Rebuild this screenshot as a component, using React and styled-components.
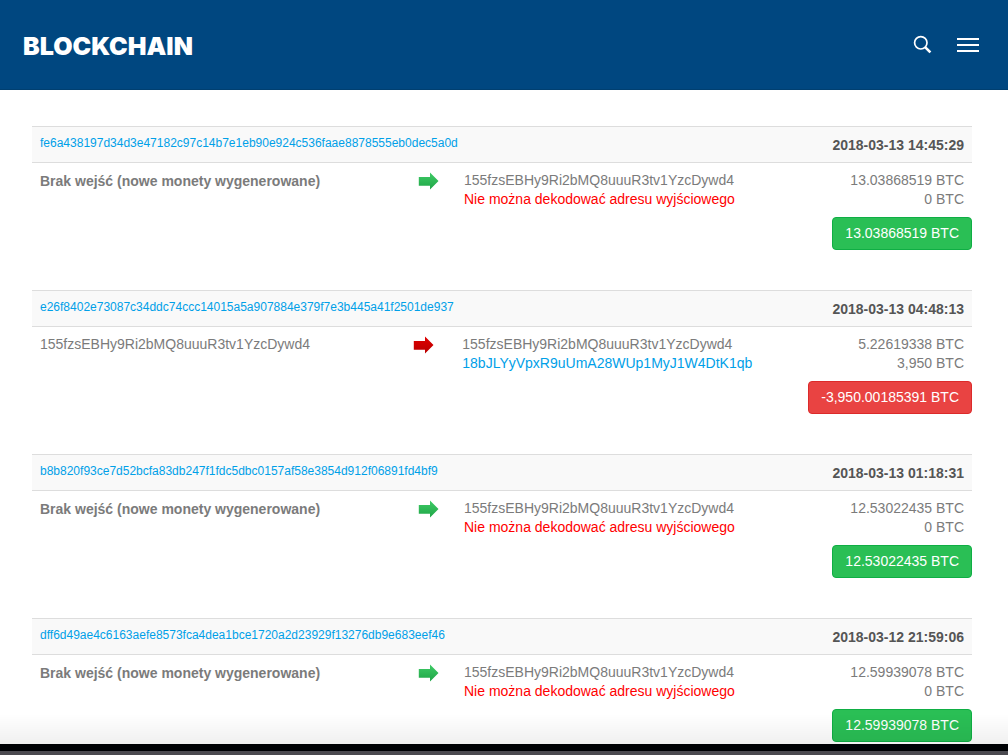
import React from "react";
import styled, { createGlobalStyle } from "styled-components";

const GlobalStyle = createGlobalStyle`
  *, *::before, *::after { box-sizing: border-box; }
  body {
    margin: 0;
    background: #fff;
    color: #7b7b7b;
    font-family: "Liberation Sans", Arial, sans-serif;
    font-size: 14px;
    line-height: 19px;
  }
`;

const Header = styled.header`
  display: flex;
  align-items: center;
  justify-content: space-between;
  height: 90px;
  padding: 0 28px 0 23px;
  background: #004780;
  border-bottom: 1px solid #003f70;
`;

const Logo = styled.a`
  color: #fff;
  font-family: Inter, sans-serif;
  font-size: 25px;
  font-weight: 900;
  line-height: 32px;
  padding-top: 3px;
  text-decoration: none;
`;

const Tools = styled.div`
  display: flex;
  align-items: center;
  gap: 24px;
`;

const IconButton = styled.button`
  display: flex;
  padding: 0;
  border: 0;
  background: none;
  color: #fff;
  cursor: pointer;
`;

const Main = styled.main`
  display: flex;
  flex-direction: column;
  gap: 40px;
  padding: 36px 36px 11px 32px;
`;

const Transaction = styled.article`
  display: flex;
  flex-direction: column;
  align-items: flex-end;
`;

const Table = styled.table`
  width: 100%;
  table-layout: fixed;
  border-collapse: separate;
  border-spacing: 0;
`;

const InputCol = styled.col`
  width: ${(p) => (p.$spent ? "39.5%" : "40%")};
`;

const ArrowCol = styled.col`
  width: ${(p) => (p.$spent ? 51 : 48)}px;
`;

const AmountCol = styled.col`
  width: 20%;
`;

const HeadCell = styled.th`
  padding: ${(p) => (p.$date ? "9px 8px 7px" : "7px 8px 9px")};
  background: #f9f9f9;
  border: solid #ddd;
  border-width: 1px 0;
  color: #555;
  font-weight: ${(p) => (p.$date ? 700 : 400)};
  text-align: ${(p) => (p.$date ? "right" : "left")};
  vertical-align: top;
  white-space: nowrap;
`;

const Cell = styled.td`
  padding: 8px;
  text-align: ${(p) => (p.$right ? "right" : "left")};
  vertical-align: top;
  white-space: nowrap;
`;

const ArrowCell = styled(Cell)`
  padding: 8px 10px;
`;

const Arrow = styled.svg`
  display: block;
`;

const Link = styled.a`
  color: #00a0e8;
  text-decoration: none;
`;

const HashLink = styled(Link)`
  display: block;
  font-size: 12px;
`;

const Line = styled.div`
  color: ${(p) => (p.$error ? "#f00" : "inherit")};
`;

const NewCoins = styled.strong`
  display: block;
  padding-top: 1px;
`;

const Total = styled.button`
  height: 33px;
  padding: 0 12px;
  border: 1px solid ${(p) => (p.$spent ? "#dc2a2a" : "#0fae44")};
  border-radius: 4px;
  background: ${(p) => (p.$spent ? "#e94342" : "#2abf55")};
  color: #fff;
  font: inherit;
  white-space: nowrap;
  cursor: pointer;
`;

const ScreenEdge = styled.div`
  position: fixed;
  right: 0;
  bottom: 0;
  left: 0;
  pointer-events: none;
`;

const EdgeShade = styled.div`
  height: 30px;
  background: linear-gradient(rgba(0, 0, 0, 0), rgba(0, 0, 0, 0.06));
`;

const EdgeBar = styled.div`
  height: 11px;
  background: #4b4a50;
  border-top: 7px solid #000205;
`;

const ADDRESS = "155fzsEBHy9Ri2bMQ8uuuR3tv1YzcDywd4";
const UNDECODED = "Nie można dekodować adresu wyjściowego";

const transactions = [
  {
    hash: "fe6a438197d34d3e47182c97c14b7e1eb90e924c536faae8878555eb0dec5a0d",
    date: "2018-03-13 14:45:29",
    amounts: ["13.03868519 BTC", "0 BTC"],
    total: "13.03868519 BTC",
  },
  {
    hash: "e26f8402e73087c34ddc74ccc14015a5a907884e379f7e3b445a41f2501de937",
    date: "2018-03-13 04:48:13",
    from: ADDRESS,
    to: "18bJLYyVpxR9uUmA28WUp1MyJ1W4DtK1qb",
    amounts: ["5.22619338 BTC", "3,950 BTC"],
    total: "-3,950.00185391 BTC",
  },
  {
    hash: "b8b820f93ce7d52bcfa83db247f1fdc5dbc0157af58e3854d912f06891fd4bf9",
    date: "2018-03-13 01:18:31",
    amounts: ["12.53022435 BTC", "0 BTC"],
    total: "12.53022435 BTC",
  },
  {
    hash: "dff6d49ae4c6163aefe8573fca4dea1bce1720a2d23929f13276db9e683eef46",
    date: "2018-03-12 21:59:06",
    amounts: ["12.59939078 BTC", "0 BTC"],
    total: "12.59939078 BTC",
  },
];

function DirectionArrow({ spent }) {
  const id = spent ? "arrow-red" : "arrow-green";
  return (
    <Arrow width="21" height="20" viewBox="0 0 21 20" aria-hidden="true">
      <defs>
        <linearGradient id={id} x1="0" y1="0" x2="0" y2="1">
          <stop offset="0" stopColor={spent ? "#e00000" : "#3fcb66"} />
          <stop offset="1" stopColor={spent ? "#b80000" : "#1fa547"} />
        </linearGradient>
      </defs>
      <path d="M0.8 6H12V1.5L20.5 10L12 18.6V14.8H0.8Z" fill={`url(#${id})`} />
    </Arrow>
  );
}

function TransactionItem({ tx }) {
  const spent = Boolean(tx.from);
  return (
    <Transaction>
      <Table>
        <colgroup>
          <InputCol $spent={spent} />
          <ArrowCol $spent={spent} />
          <col />
          <AmountCol />
        </colgroup>
        <thead>
          <tr>
            <HeadCell colSpan={3}>
              <HashLink href="#">{tx.hash}</HashLink>
            </HeadCell>
            <HeadCell $date>{tx.date}</HeadCell>
          </tr>
        </thead>
        <tbody>
          <tr>
            <Cell>
              {spent ? tx.from : <NewCoins>Brak wejść (nowe monety wygenerowane)</NewCoins>}
            </Cell>
            <ArrowCell>
              <DirectionArrow spent={spent} />
            </ArrowCell>
            <Cell>
              <Line>{ADDRESS}</Line>
              {spent ? (
                <Line><Link href="#">{tx.to}</Link></Line>
              ) : (
                <Line $error>{UNDECODED}</Line>
              )}
            </Cell>
            <Cell $right>
              {tx.amounts.map((amount) => (
                <Line key={amount}>{amount}</Line>
              ))}
            </Cell>
          </tr>
        </tbody>
      </Table>
      <Total type="button" $spent={spent}>{tx.total}</Total>
    </Transaction>
  );
}

export default function App() {
  return (
    <>
      <GlobalStyle />
      <Header>
        <Logo href="#">BLOCKCHAIN</Logo>
        <Tools>
          <IconButton type="button" aria-label="Szukaj">
            <svg width="20" height="20" viewBox="0 0 20 20" fill="none" stroke="currentColor">
              <circle cx="7.8" cy="7.8" r="6.2" strokeWidth="1.7" />
              <path d="M12.1 12.1L17.4 17.4" strokeWidth="2.6" />
            </svg>
          </IconButton>
          <IconButton type="button" aria-label="Menu">
            <svg width="23" height="20" viewBox="0 0 23 20" fill="currentColor">
              <path d="M0 3H22V5H0ZM0 9H22V11H0ZM0 15H22V17H0Z" />
            </svg>
          </IconButton>
        </Tools>
      </Header>
      <Main>
        {transactions.map((tx) => (
          <TransactionItem key={tx.hash} tx={tx} />
        ))}
      </Main>
      <ScreenEdge aria-hidden="true">
        <EdgeShade />
        <EdgeBar />
      </ScreenEdge>
    </>
  );
}
